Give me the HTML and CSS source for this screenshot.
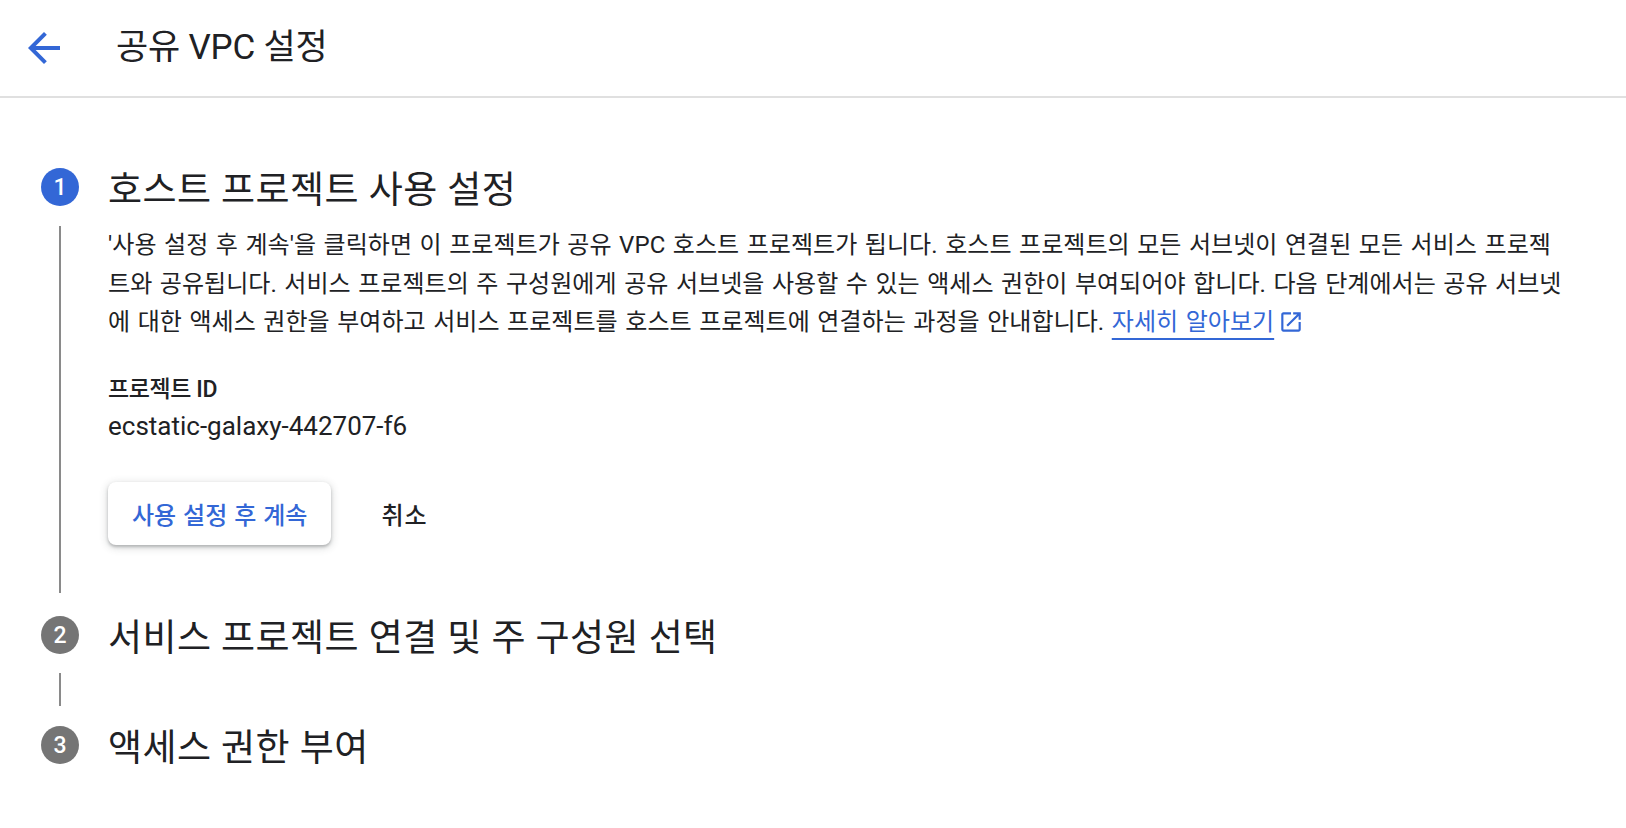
FILE: index.html
```html
<!DOCTYPE html>
<html lang="ko">
<head>
<meta charset="utf-8">
<title>공유 VPC 설정</title>
<link rel="stylesheet" href="styles.css">
</head>
<body>
<header class="topbar">
  <button class="back" aria-label="뒤로">
    <svg viewBox="0 0 24 24" width="48" height="48"><path d="M20 11H7.83l5.59-5.59L12 4l-8 8 8 8 1.41-1.41L7.83 13H20v-2z"/></svg>
  </button>
  <h1 class="page-title">공유 VPC 설정</h1>
</header>
<main class="stepper">
  <section class="step">
    <div class="step-num active">1</div>
    <h2 class="step-title">호스트 프로젝트 사용 설정</h2>
    <div class="step-rail long"></div>
    <div class="step-body">
      <p class="desc">'사용 설정 후 계속'을 클릭하면 이 프로젝트가 공유 VPC 호스트 프로젝트가 됩니다. 호스트 프로젝트의 모든 서브넷이 연결된 모든 서비스 프로젝<br>트와 공유됩니다. 서비스 프로젝트의 주 구성원에게 공유 서브넷을 사용할 수 있는 액세스 권한이 부여되어야 합니다. 다음 단계에서는 공유 서브넷<br>에 대한 액세스 권한을 부여하고 서비스 프로젝트를 호스트 프로젝트에 연결하는 과정을 안내합니다. <a class="link" href="#">자세히 알아보기</a><svg class="ext" viewBox="0 0 24 24" width="26" height="26"><path d="M19 19H5V5h7V3H5c-1.11 0-2 .9-2 2v14c0 1.1.89 2 2 2h14c1.1 0 2-.9 2-2v-7h-2v7zM14 3v2h3.59l-9.83 9.83 1.41 1.41L19 6.41V10h2V3h-7z"/></svg></p>
      <div class="field-label">프로젝트 ID</div>
      <div class="field-value">ecstatic-galaxy-442707-f6</div>
      <div class="actions">
        <button class="btn-primary">사용 설정 후 계속</button>
        <button class="btn-text">취소</button>
      </div>
    </div>
  </section>
  <section class="step">
    <div class="step-num">2</div>
    <h2 class="step-title">서비스 프로젝트 연결 및 주 구성원 선택</h2>
    <div class="step-rail short"></div>
    <div class="step-body empty"></div>
  </section>
  <section class="step">
    <div class="step-num">3</div>
    <h2 class="step-title">액세스 권한 부여</h2>
  </section>
</main>
</body>
</html>
```
FILE: styles.css
```css
* { box-sizing: border-box; }
html, body { margin: 0; padding: 0; background: #fff; }
body {
  font-family: Roboto, "Noto Sans CJK KR", sans-serif;
  color: #202124;
  width: 1626px;
  height: 828px;
  overflow: hidden;
}
.topbar {
  height: 98px;
  border-bottom: 2px solid #e0e0e0;
  display: flex;
  align-items: center;
  padding-left: 20px;
}
.back {
  width: 48px;
  height: 48px;
  padding: 0;
  margin: 0;
  border: 0;
  background: none;
  display: flex;
  fill: #3367d6;
}
.page-title {
  margin: 0 0 0 48px;
  font-size: 35px;
  font-weight: 400;
  letter-spacing: -0.2px;
  line-height: 40px;
  color: #202124;
}
.stepper {
  padding: 70px 0 0 41px;
}
.step {
  display: grid;
  grid-template-columns: 38px 1fr;
  column-gap: 29px;
}
.step-num {
  width: 38px;
  height: 38px;
  border-radius: 50%;
  background: #757575;
  color: #fff;
  font-size: 23px;
  font-weight: 500;
  display: flex;
  align-items: center;
  justify-content: center;
}
.step-num.active { background: #3367d6; }
.step-title {
  margin: 0;
  height: 38px;
  display: flex;
  align-items: center;
  font-size: 37px;
  font-weight: 400;
  letter-spacing: 0.45px;
  white-space: nowrap;
  color: #202124;
}
.step-rail {
  justify-self: center;
  width: 2px;
  background: #8a8a8a;
}
.step-rail.long { margin: 20px 0 23px; }
.step-rail.short { margin: 19px 0 20px; }
.step-body { padding-bottom: 71px; }
.step-body.empty { height: 72px; padding: 0; }
.desc {
  margin: 20px 0 0;
  font-size: 24px;
  line-height: 38.5px;
  letter-spacing: 0.05px;
  word-spacing: 1.5px;
  width: 1500px;
}
.link {
  color: #3367d6;
  text-decoration: underline;
  text-decoration-thickness: 2px;
  text-underline-offset: 8px;
}
.ext {
  fill: #3367d6;
  vertical-align: -5px;
  margin-left: 4px;
}
.field-label {
  margin-top: 30px;
  font-size: 23px;
  line-height: 35px;
  font-weight: 500;
  letter-spacing: -0.4px;
}
.field-value {
  font-size: 26px;
  line-height: 38px;
}
.actions {
  margin-top: 37.5px;
  display: flex;
  align-items: center;
  gap: 50px;
}
.btn-primary {
  height: 63px;
  padding: 0 24px;
  border: 0;
  border-radius: 8px;
  background: #fff;
  color: #3367d6;
  font-family: Roboto, "Noto Sans CJK KR", sans-serif;
  font-size: 24px;
  font-weight: 500;
  letter-spacing: 0;
  word-spacing: 1px;
  box-shadow: 0 2px 3px rgba(60,64,67,.3), 0 2px 7px 2px rgba(60,64,67,.15);
}
.btn-text {
  height: 63px;
  padding: 0;
  border: 0;
  background: none;
  color: #202124;
  font-family: Roboto, "Noto Sans CJK KR", sans-serif;
  font-size: 24px;
  font-weight: 500;
  letter-spacing: 1px;
}
```
